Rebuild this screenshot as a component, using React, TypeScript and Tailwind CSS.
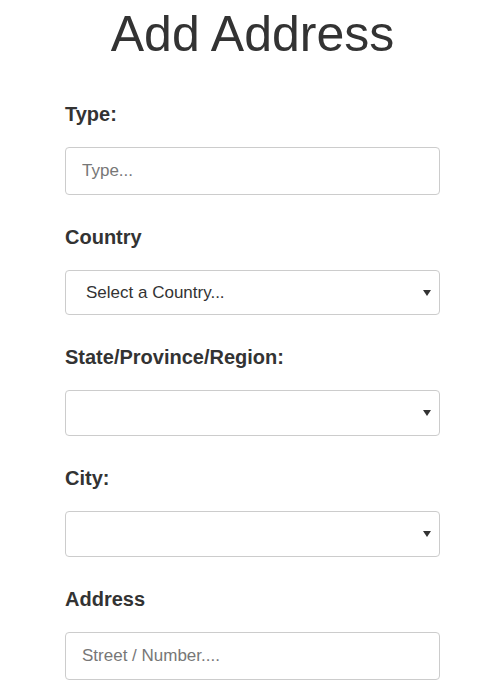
import React, { FC, ReactNode } from 'react'

const font = { fontFamily: '"Liberation Sans", Arial, sans-serif' }

const Arrow: FC = () => (
  <svg className="pointer-events-none absolute right-[9px] top-1/2 -translate-y-1/2" width="8" height="7" viewBox="0 0 8 7">
    <path d="M0 0.5 H8 L4 6.5 Z" fill="#333" />
  </svg>
)

const Field: FC<{ label: string; children: ReactNode }> = ({ label, children }) => (
  <div className="mb-[28px]">
    <label className="mb-[19px] block text-[20px] font-bold leading-[28px] text-[#333]">{label}</label>
    {children}
  </div>
)

const TextInput: FC<{ placeholder: string; id: string }> = ({ placeholder, id }) => (
  <input
    id={id}
    type="text"
    placeholder={placeholder}
    className="block h-[48px] w-full rounded-[4px] border border-[#ccc] bg-white px-[16px] text-[17px] text-[#333] placeholder:text-[#777] focus:outline-none"
    style={font}
  />
)

const Select: FC<{ id: string; options: string[]; tall?: boolean }> = ({ id, options, tall }) => (
  <div className="relative">
    <select
      id={id}
      className={
        tall
          ? 'block h-[46px] w-full appearance-none rounded-[4px] border border-[#ccc] bg-white pl-[20px] pr-[24px] text-[17px] text-[#333] focus:outline-none'
          : 'block h-[45px] w-full appearance-none rounded-[4px] border border-[#ccc] bg-white pl-[20px] pr-[24px] text-[17px] text-[#333] focus:outline-none'
      }
      style={font}
    >
      {options.map((o) => (
        <option key={o}>{o}</option>
      ))}
    </select>
    <Arrow />
  </div>
)

export default function App() {
  return (
    <div className="min-h-[697px] bg-white" style={font}>
      <div className="w-[375px] pl-0 ml-[65px]">
        <h1 className="pt-[7px] text-center text-[50px] font-normal leading-[55px] text-[#333]" style={{ width: 375 }}>
          Add Address
        </h1>
        <form className="mt-[38px]">
          <Field label="Type:">
            <TextInput id="type" placeholder="Type..." />
          </Field>
          <Field label="Country">
            <Select id="country" options={['Select a Country...']} />
          </Field>
          <Field label="State/Province/Region:">
            <Select id="state" options={['']} tall />
          </Field>
          <Field label="City:">
            <Select id="city" options={['']} tall />
          </Field>
          <Field label="Address">
            <TextInput id="address" placeholder="Street / Number...." />
          </Field>
        </form>
      </div>
    </div>
  )
}
